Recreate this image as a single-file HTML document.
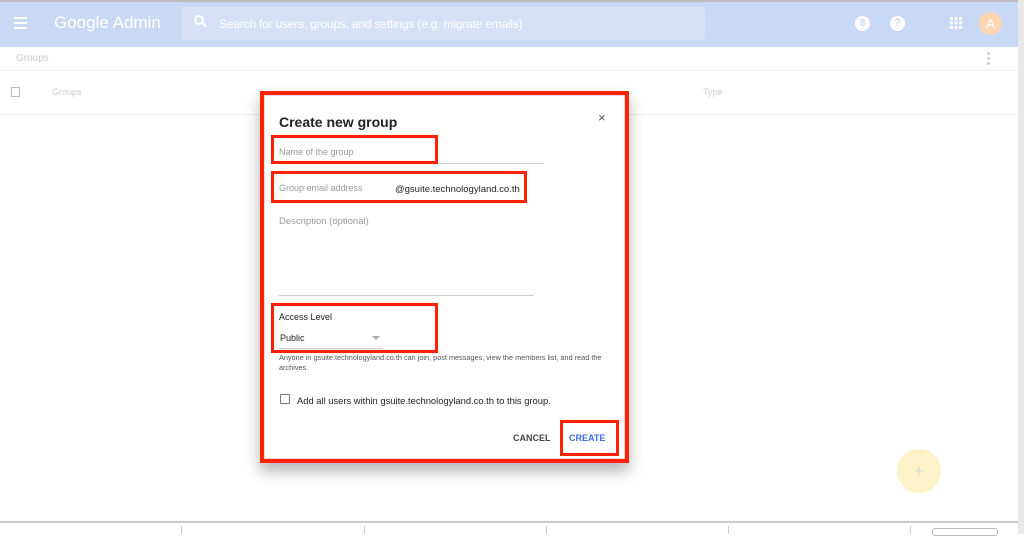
<!DOCTYPE html>
<html><head><meta charset="utf-8"><style>
*{margin:0;padding:0;box-sizing:border-box}
body{width:1024px;height:534px;overflow:hidden;background:#fff;font-family:"Liberation Sans",sans-serif;position:relative}
.a{position:absolute}
.r{position:absolute;border:3px solid #ff2200}
</style></head><body>
<div class="a" style="left:0;top:0;width:1024px;height:2px;background:#bbb"></div>
<div class="a" style="left:0;top:2px;width:1018px;height:45px;background:#c9d8f4"></div>
<div class="a" style="left:1018px;top:0;width:6px;height:534px;background:#e8e8e8"></div>
<div class="a" style="left:14px;top:17px;width:13px;height:2px;background:#fff;box-shadow:0 5px 0 #fff,0 10px 0 #fff"></div>
<div class="a" style="left:54px;top:13px;font-size:17px;color:#fff">Google Admin</div>
<div class="a" style="left:182px;top:7px;width:523px;height:33px;background:#d6e1f6;border-radius:3px"></div>
<div class="a" style="left:194px;top:15px;width:10px;height:10px;border:2px solid #fff;border-radius:50%"></div>
<div class="a" style="left:202px;top:24px;width:5px;height:2px;background:#fff;transform:rotate(45deg)"></div>
<div class="a" style="left:219px;top:17px;font-size:12px;color:#fff;letter-spacing:-0.2px">Search for users, groups, and settings (e.g. migrate emails)</div>
<div class="a" style="left:855px;top:16px;width:15px;height:15px;border-radius:50%;background:#fff;color:#c9d8f4;font-size:10px;text-align:center;line-height:15px;font-weight:bold">8</div>
<div class="a" style="left:890px;top:16px;width:15px;height:15px;border-radius:50%;background:#fff;color:#c9d8f4;font-size:11px;text-align:center;line-height:15px;font-weight:bold">?</div>
<svg class="a" style="left:950px;top:17px" width="12" height="12"><g fill="#fff"><rect x="0" y="0" width="3" height="3"/><rect x="4.5" y="0" width="3" height="3"/><rect x="9" y="0" width="3" height="3"/><rect x="0" y="4.5" width="3" height="3"/><rect x="4.5" y="4.5" width="3" height="3"/><rect x="9" y="4.5" width="3" height="3"/><rect x="0" y="9" width="3" height="3"/><rect x="4.5" y="9" width="3" height="3"/><rect x="9" y="9" width="3" height="3"/></g></svg>
<div class="a" style="left:979px;top:12px;width:23px;height:23px;border-radius:50%;background:#fdd5b3;color:#fff;font-size:13px;text-align:center;line-height:23px">A</div>
<div class="a" style="left:16px;top:53px;font-size:10px;color:#ccc">Groups</div>
<div class="a" style="left:987px;top:52px;width:3px;height:3px;background:#ccc;border-radius:50%;box-shadow:0 5px 0 #ccc,0 10px 0 #ccc"></div>
<div class="a" style="left:0;top:70px;width:1018px;height:1px;background:#eee"></div>
<div class="a" style="left:11px;top:87px;width:9px;height:10px;border:1px solid #bbb"></div>
<div class="a" style="left:52px;top:87px;font-size:9px;color:#ccc">Groups</div>
<div class="a" style="left:703px;top:87px;font-size:9px;color:#ccc">Type</div>
<div class="a" style="left:0;top:114px;width:1018px;height:1px;background:#eee"></div>
<div class="a" style="left:897px;top:449px;width:44px;height:44px;border-radius:50%;background:#fef3c8;color:#ddd;font-size:18px;text-align:center;line-height:44px">+</div>
<div class="a" style="left:0;top:521px;width:1018px;height:2px;background:#ccc"></div>
<div class="a" style="left:181px;top:526px;width:1px;height:8px;background:#ccc"></div>
<div class="a" style="left:364px;top:526px;width:1px;height:8px;background:#ccc"></div>
<div class="a" style="left:546px;top:526px;width:1px;height:8px;background:#ccc"></div>
<div class="a" style="left:728px;top:526px;width:1px;height:8px;background:#ccc"></div>
<div class="a" style="left:910px;top:526px;width:1px;height:8px;background:#ccc"></div>
<div class="a" style="left:932px;top:528px;width:66px;height:8px;border:1px solid #bbb;border-radius:3px"></div>

<div class="a" style="left:260px;top:91px;width:369px;height:372px;background:#fff;box-shadow:0 8px 14px rgba(0,0,0,.3)"></div>
<div class="r" style="left:260px;top:91px;width:369px;height:372px;border-width:4px"></div>
<div class="a" style="left:264px;top:95px;width:361px;height:364px;border:1px solid #ddd"></div>
<div class="a" style="left:279px;top:114px;font-size:14px;font-weight:bold;color:#222">Create new group</div>
<div class="a" style="left:598px;top:110px;font-size:13px;color:#555">×</div>
<div class="a" style="left:279px;top:147px;font-size:9px;color:#999">Name of the group</div>
<div class="a" style="left:279px;top:163px;width:265px;height:1px;background:#ccc"></div>
<div class="r" style="left:271px;top:135px;width:167px;height:29px"></div>
<div class="a" style="left:279px;top:183px;font-size:9px;color:#999">Group email address</div>
<div class="a" style="left:395px;top:184px;font-size:9.5px;color:#222">@gsuite.technologyland.co.th</div>
<div class="r" style="left:271px;top:171px;width:256px;height:32px"></div>
<div class="a" style="left:279px;top:216px;font-size:9.5px;color:#999">Description (optional)</div>
<div class="a" style="left:279px;top:295px;width:255px;height:1px;background:#ccc"></div>
<div class="a" style="left:279px;top:312px;font-size:9px;color:#222">Access Level</div>
<div class="a" style="left:280px;top:333px;font-size:9px;color:#222">Public</div>
<div class="a" style="left:372px;top:336px;border-left:4px solid transparent;border-right:4px solid transparent;border-top:4px solid #aaa"></div>
<div class="a" style="left:279px;top:348px;width:104px;height:1px;background:#ccc"></div>
<div class="r" style="left:271px;top:303px;width:167px;height:50px"></div>
<div class="a" style="left:279px;top:353px;font-size:7.3px;color:#555;line-height:10px;width:330px">Anyone in gsuite.technologyland.co.th can join, post messages, view the members list, and read the archives.</div>
<div class="a" style="left:280px;top:394px;width:10px;height:10px;border:1px solid #777;border-radius:1px"></div>
<div class="a" style="left:297px;top:395px;font-size:9.4px;color:#222">Add all users within gsuite.technologyland.co.th to this group.</div>
<div class="a" style="left:513px;top:433px;font-size:9px;font-weight:bold;color:#444">CANCEL</div>
<div class="a" style="left:569px;top:433px;font-size:9px;font-weight:bold;color:#3b6ee0">CREATE</div>
<div class="r" style="left:560px;top:420px;width:59px;height:36px"></div>
</body></html>
